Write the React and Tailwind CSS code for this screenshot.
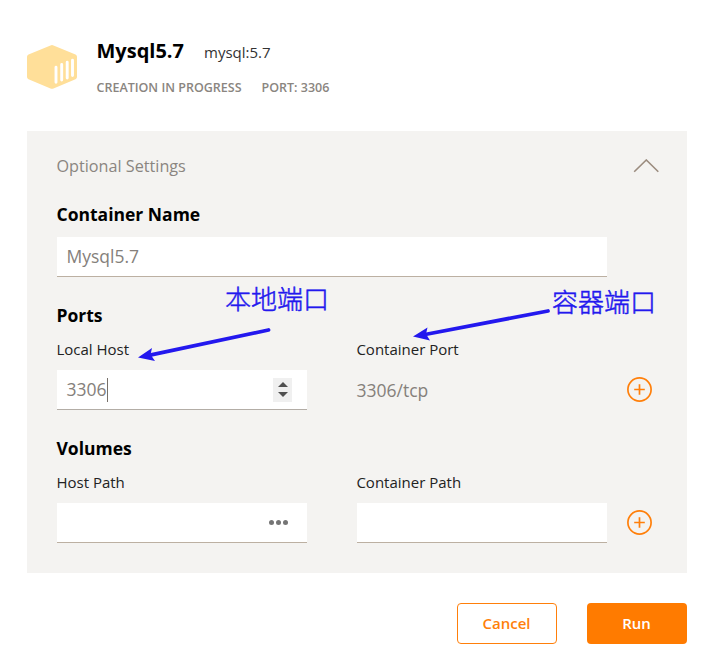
import React from "react";

function Label({ children }) {
  return <div className="h-5 w-[250px] text-[15px] leading-5 text-[#222] -indent-[0.6px]">{children}</div>;
}

function Heading({ children }) {
  return <h2 className="h-6 text-[17.5px] leading-6 font-bold text-black -indent-[0.5px]">{children}</h2>;
}

function AddButton() {
  return (
    <button aria-label="Add" className="ml-5 flex h-[26px] w-[26px] shrink-0">
      <svg width="26" height="26" viewBox="0 0 26 26" fill="none" stroke="#ff7f0a" strokeWidth="1.7">
        <circle cx="12.5" cy="12.5" r="11.6" />
        <path d="M7.2 12.5H17.8M12.5 7.2V17.8" />
      </svg>
    </button>
  );
}

function Annotations() {
  return (
    <div className="pointer-events-none absolute inset-0 font-['Noto_Sans_CJK_SC',sans-serif] text-[26px] leading-[30px] text-[#2318ee] [-webkit-text-stroke:0.5px_#2318ee]">
      <svg className="absolute inset-0" width="714" height="659" viewBox="0 0 714 659" fill="#2318ee">
        <path d="M268.500 330L150 355.200" stroke="#2318ee" strokeWidth="3.800" strokeLinecap="round" />
        <path d="M138 357.500L152 348L150.500 354.500L155 361Z" />
        <path d="M548 311L425 334.500" stroke="#2318ee" strokeWidth="3.800" strokeLinecap="round" />
        <path d="M413 336.500L427.500 327.500L426 334L430 340.500Z" />
      </svg>
      <span className="absolute top-[283px] left-[225px] whitespace-nowrap font-light">本地端口</span>
      <span className="absolute top-[286px] left-[552px] whitespace-nowrap font-light">容器端口</span>
    </div>
  );
}

export default function App() {
  return (
    <div className="relative h-[659px] w-[714px] overflow-hidden bg-white px-[27px] font-['Open_Sans',sans-serif]">
      <header className="flex h-[131px] pt-[39px]">
        <svg className="mt-[5px] shrink-0" width="51" height="46" viewBox="0 0 51 46">
          <path d="M23.500 1.400Q25 .6 26.500 1.400L48.500 10.500Q50 11.200 50 12.800V33Q50 34.500 48.500 35.300L26.500 44.500Q25 45.200 23.500 44.500L1.500 35.300Q0 34.500 0 33V12.800Q0 11.200 1.500 10.500Z" fill="#ffdf99" />
          <path d="M29 23.300V38.300M34.700 20.500V36M40.200 18.200V34M45.500 16.300V31.500" stroke="white" strokeWidth="2.900" strokeLinecap="round" />
        </svg>
        <div className="ml-[18.500px]">
          <div className="flex h-6 items-baseline">
            <h1 className="text-[20px] leading-6 font-bold text-black">Mysql5.7</h1>
            <span className="ml-5 text-[15px] leading-6 text-[#333]">mysql:5.7</span>
          </div>
          <div className="mt-[15px] flex gap-5 text-[12.5px] leading-5 font-semibold text-[#8a8580]">
            <span>CREATION IN PROGRESS</span>
            <span>PORT: 3306</span>
          </div>
        </div>
      </header>
      <main className="h-[442px] bg-[#f4f3f1] pt-[23px] pr-7 pl-[30px]">
        <div className="flex h-6 items-center justify-between text-[16.2px] leading-6 text-[#8a8580]">
          <span className="-indent-[0.5px]">Optional Settings</span>
          <svg width="26" height="14" viewBox="0 0 26 14" fill="none" stroke="#9b8c7f" strokeWidth="1.600">
            <path d="M1.200 12.800L13.300 1L25.300 12.800" />
          </svg>
        </div>
        <div className="mt-6">
          <Heading>Container Name</Heading>
          <div className="mt-[11px] h-10 w-[550px] border-b border-[#bcb0a2] bg-white px-[9.500px] text-[17.5px] leading-[38px] text-[#85807b]">Mysql5.7</div>
        </div>
        <div className="mt-[26px]">
          <Heading>Ports</Heading>
          <div className="mt-3 flex gap-[50px]">
            <Label>Local Host</Label>
            <Label>Container Port</Label>
          </div>
          <div className="mt-[11px] flex h-10 items-center">
            <div className="flex h-10 w-[250px] items-center border-b border-[#b3ada6] bg-white pr-[15px] pl-[9.500px] text-[17.5px] text-[#85807b]">
              <span className="pb-px leading-[37px]">3306</span>
              <span className="h-6 w-px bg-[#777069]" />
              <span className="ml-auto flex h-6 w-[19px] flex-col items-center justify-center gap-[5px] bg-[#f0f0f0]">
                <span className="h-0 w-0 border-x-[5px] border-b-[5px] border-x-transparent border-b-[#505050]" />
                <span className="h-0 w-0 border-x-[5px] border-t-[5px] border-x-transparent border-t-[#505050]" />
              </span>
            </div>
            <div className="ml-[50px] w-[250px] text-[17.5px] leading-10 text-[#85807b] -indent-[0.5px]">3306/tcp</div>
            <AddButton />
          </div>
        </div>
        <div className="mt-[26px]">
          <Heading>Volumes</Heading>
          <div className="mt-3 flex gap-[50px]">
            <Label>Host Path</Label>
            <Label>Container Path</Label>
          </div>
          <div className="mt-[11px] flex h-10 items-center">
            <div className="flex h-10 w-[250px] items-center justify-end gap-[2px] border-b border-[#bcb0a2] bg-white pr-[19px]">
              <span className="h-[5px] w-[5px] rounded-full bg-[#757575]" />
              <span className="h-[5px] w-[5px] rounded-full bg-[#757575]" />
              <span className="h-[5px] w-[5px] rounded-full bg-[#757575]" />
            </div>
            <div className="ml-[50px] h-10 w-[250px] border-b border-[#bcb0a2] bg-white" />
            <AddButton />
          </div>
        </div>
      </main>
      <footer className="mt-[30px] flex justify-end gap-[30px] text-[15px] font-semibold">
        <button className="h-[41px] w-[100px] rounded-[4px] border border-[#ff7f0a] pr-px text-[#ff7f0a]">Cancel</button>
        <button className="h-[41px] w-[100px] rounded-[4px] bg-[#ff7b00] pr-px font-semibold text-white">Run</button>
      </footer>
      <Annotations />
    </div>
  );
}
